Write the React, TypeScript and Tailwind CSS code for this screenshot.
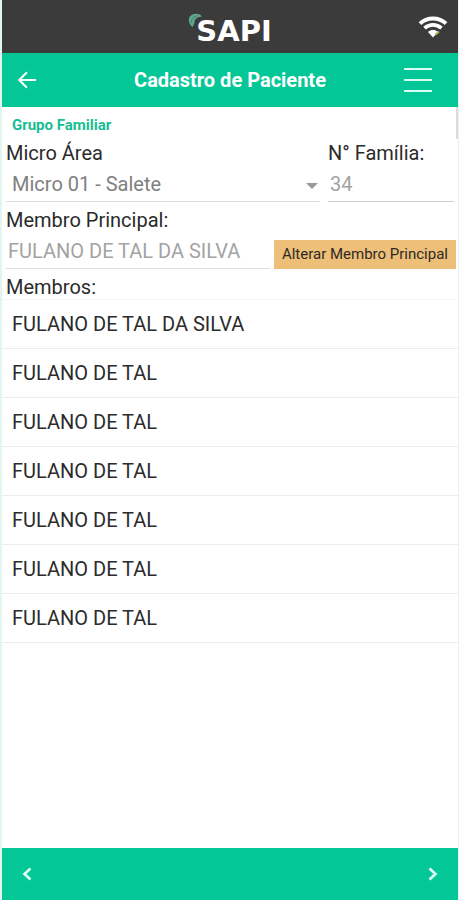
import { useState } from "react";

const members = [
  "FULANO DE TAL DA SILVA",
  "FULANO DE TAL",
  "FULANO DE TAL",
  "FULANO DE TAL",
  "FULANO DE TAL",
  "FULANO DE TAL",
  "FULANO DE TAL",
];

function WifiIcon() {
  return (
    <svg viewBox="0 0 30 24" className="h-6 w-[30px]" fill="none" aria-hidden="true">
      <path d="M2 8.600C9 1.800 21 1.800 28 8.600" stroke="#fff" strokeWidth="4" />
      <path d="M6.500 13.200C11.500 8.800 18.500 8.800 23.500 13.200" stroke="#fff" strokeWidth="3.600" />
      <path d="M10 17C13 14.400 17 14.400 20 17L15 22.500Z" fill="#fff" />
      <path d="M17 18.500L20.500 15.800L21.500 17.500L17.800 20.500Z" fill="#b3b84f" />
    </svg>
  );
}

function StatusBar() {
  return (
    <div className="grid h-[53px] grid-cols-[1fr_auto_1fr] items-center bg-[#3b3b3b] px-2.5">
      <div className="col-start-2 flex items-start pt-1">
        <svg viewBox="0 0 14 16" className="-mr-1.5 h-4 w-3.5" aria-hidden="true">
          <path d="M4.500 14C-.8 10 -.2 3.500 4.500 1.500C8 0 12.500 .6 14 3.800C9.500 3.800 6 6 6.500 10Z" fill="#5fa890" />
          <path d="M3 10C3 6.500 5.500 3.500 10 2.600" stroke="#3f6f62" strokeWidth=".8" fill="none" />
        </svg>
        <span className="pt-1 font-['DejaVu_Sans',sans-serif] text-[29px] leading-7 font-bold text-white">
          SAPI
        </span>
      </div>
      <div className="flex justify-end">
        <WifiIcon />
      </div>
    </div>
  );
}

function Header() {
  return (
    <header className="grid h-[54px] grid-cols-[48px_1fr_48px] items-center bg-[#04c797] px-4 text-white">
      <button type="button" aria-label="Voltar" className="flex h-12 items-center">
        <svg viewBox="0 0 18 18" className="size-[18px]" fill="none" stroke="currentColor" strokeWidth="2">
          <path d="M18 9H1.500M9 1.200L1.200 9L9 16.800" />
        </svg>
      </button>
      <h1 className="text-center text-xl font-bold">Cadastro de Paciente</h1>
      <button type="button" aria-label="Menu" className="flex h-12 items-center justify-center">
        <svg viewBox="0 0 28 26" className="h-[26px] w-7" fill="none" stroke="#d5fff4" strokeWidth="2">
          <path d="M0 2H28M0 13H28M0 24H28" />
        </svg>
      </button>
    </header>
  );
}

function Footer() {
  return (
    <footer className="flex h-[52px] items-center justify-between bg-[#04c797] px-5 text-[#e0fff6]">
      <button type="button" aria-label="Anterior">
        <svg viewBox="0 0 10 14" className="h-3.5 w-2.5" fill="none" stroke="currentColor" strokeWidth="2.600">
          <path d="M8.500 1.500L2.500 7L8.500 12.500" />
        </svg>
      </button>
      <button type="button" aria-label="Próximo">
        <svg viewBox="0 0 10 14" className="h-3.5 w-2.5" fill="none" stroke="currentColor" strokeWidth="2.600">
          <path d="M1.500 1.500L7.500 7L1.500 12.500" />
        </svg>
      </button>
    </footer>
  );
}

export default function App() {
  const [area, setArea] = useState("01");

  return (
    <div className="flex min-h-screen flex-col border-r border-l-2 border-[#e4f5f0] bg-white font-[Roboto,sans-serif] text-[#2b2b2b]">
      <StatusBar />
      <Header />

      <main className="relative flex-1">
        {/* scroll thumb */}
        <div className="absolute top-0 right-0 h-8 w-0.5 bg-[#dcdcdc]" />

        <h2 className="px-2.5 pt-2 text-[15px] leading-5 font-bold text-[#17bd92]">Grupo Familiar</h2>

        <div className="flex gap-2 px-1 pt-1">
          <div className="flex-1">
            <label htmlFor="area" className="block text-xl leading-7">
              Micro Área
            </label>
            <div className="relative border-b border-[#dedede]">
              <select
                id="area"
                value={area}
                onChange={(e) => setArea(e.target.value)}
                className="block h-[34px] w-full appearance-none bg-transparent px-1.5 text-xl text-[#808080]"
              >
                <option value="01">Micro 01 - Salete</option>
              </select>
              <svg viewBox="0 0 12 6" className="pointer-events-none absolute top-4 right-0.5 h-1.5 w-3" aria-hidden="true">
                <path d="M0 0H12L6 6Z" fill="#999" />
              </svg>
            </div>
          </div>
          <div className="w-[126px]">
            <label htmlFor="familia" className="block text-xl leading-7">
              N° Família:
            </label>
            <input
              id="familia"
              defaultValue="34"
              className="block h-[35px] w-full border-b border-[#cfcfcf] px-0.5 text-xl text-[#a3a3a3]"
            />
          </div>
        </div>

        <div className="pt-1 pr-0.5 pl-1">
          <label htmlFor="principal" className="block text-xl leading-7">
            Membro Principal:
          </label>
          <div className="flex items-end gap-1">
            <input
              id="principal"
              defaultValue="FULANO DE TAL DA SILVA"
              className="block h-[35px] min-w-0 flex-1 border-b border-[#dedede] px-0.5 text-xl text-[#a3a3a3]"
            />
            <button type="button" className="h-[29px] bg-[#eebf78] px-2 text-[15px] text-[#2d2a26]">
              Alterar Membro Principal
            </button>
          </div>
        </div>

        <h3 className="h-[30px] px-1 pt-1 text-xl leading-7">Membros:</h3>
        <ul className="border-t border-[#f6f6f6]">
          {members.map((name, i) => (
            <li key={i} className="flex h-[49px] items-center border-b border-[#ececec] px-2.5 text-xl">
              {name}
            </li>
          ))}
        </ul>
      </main>

      <Footer />
    </div>
  );
}
